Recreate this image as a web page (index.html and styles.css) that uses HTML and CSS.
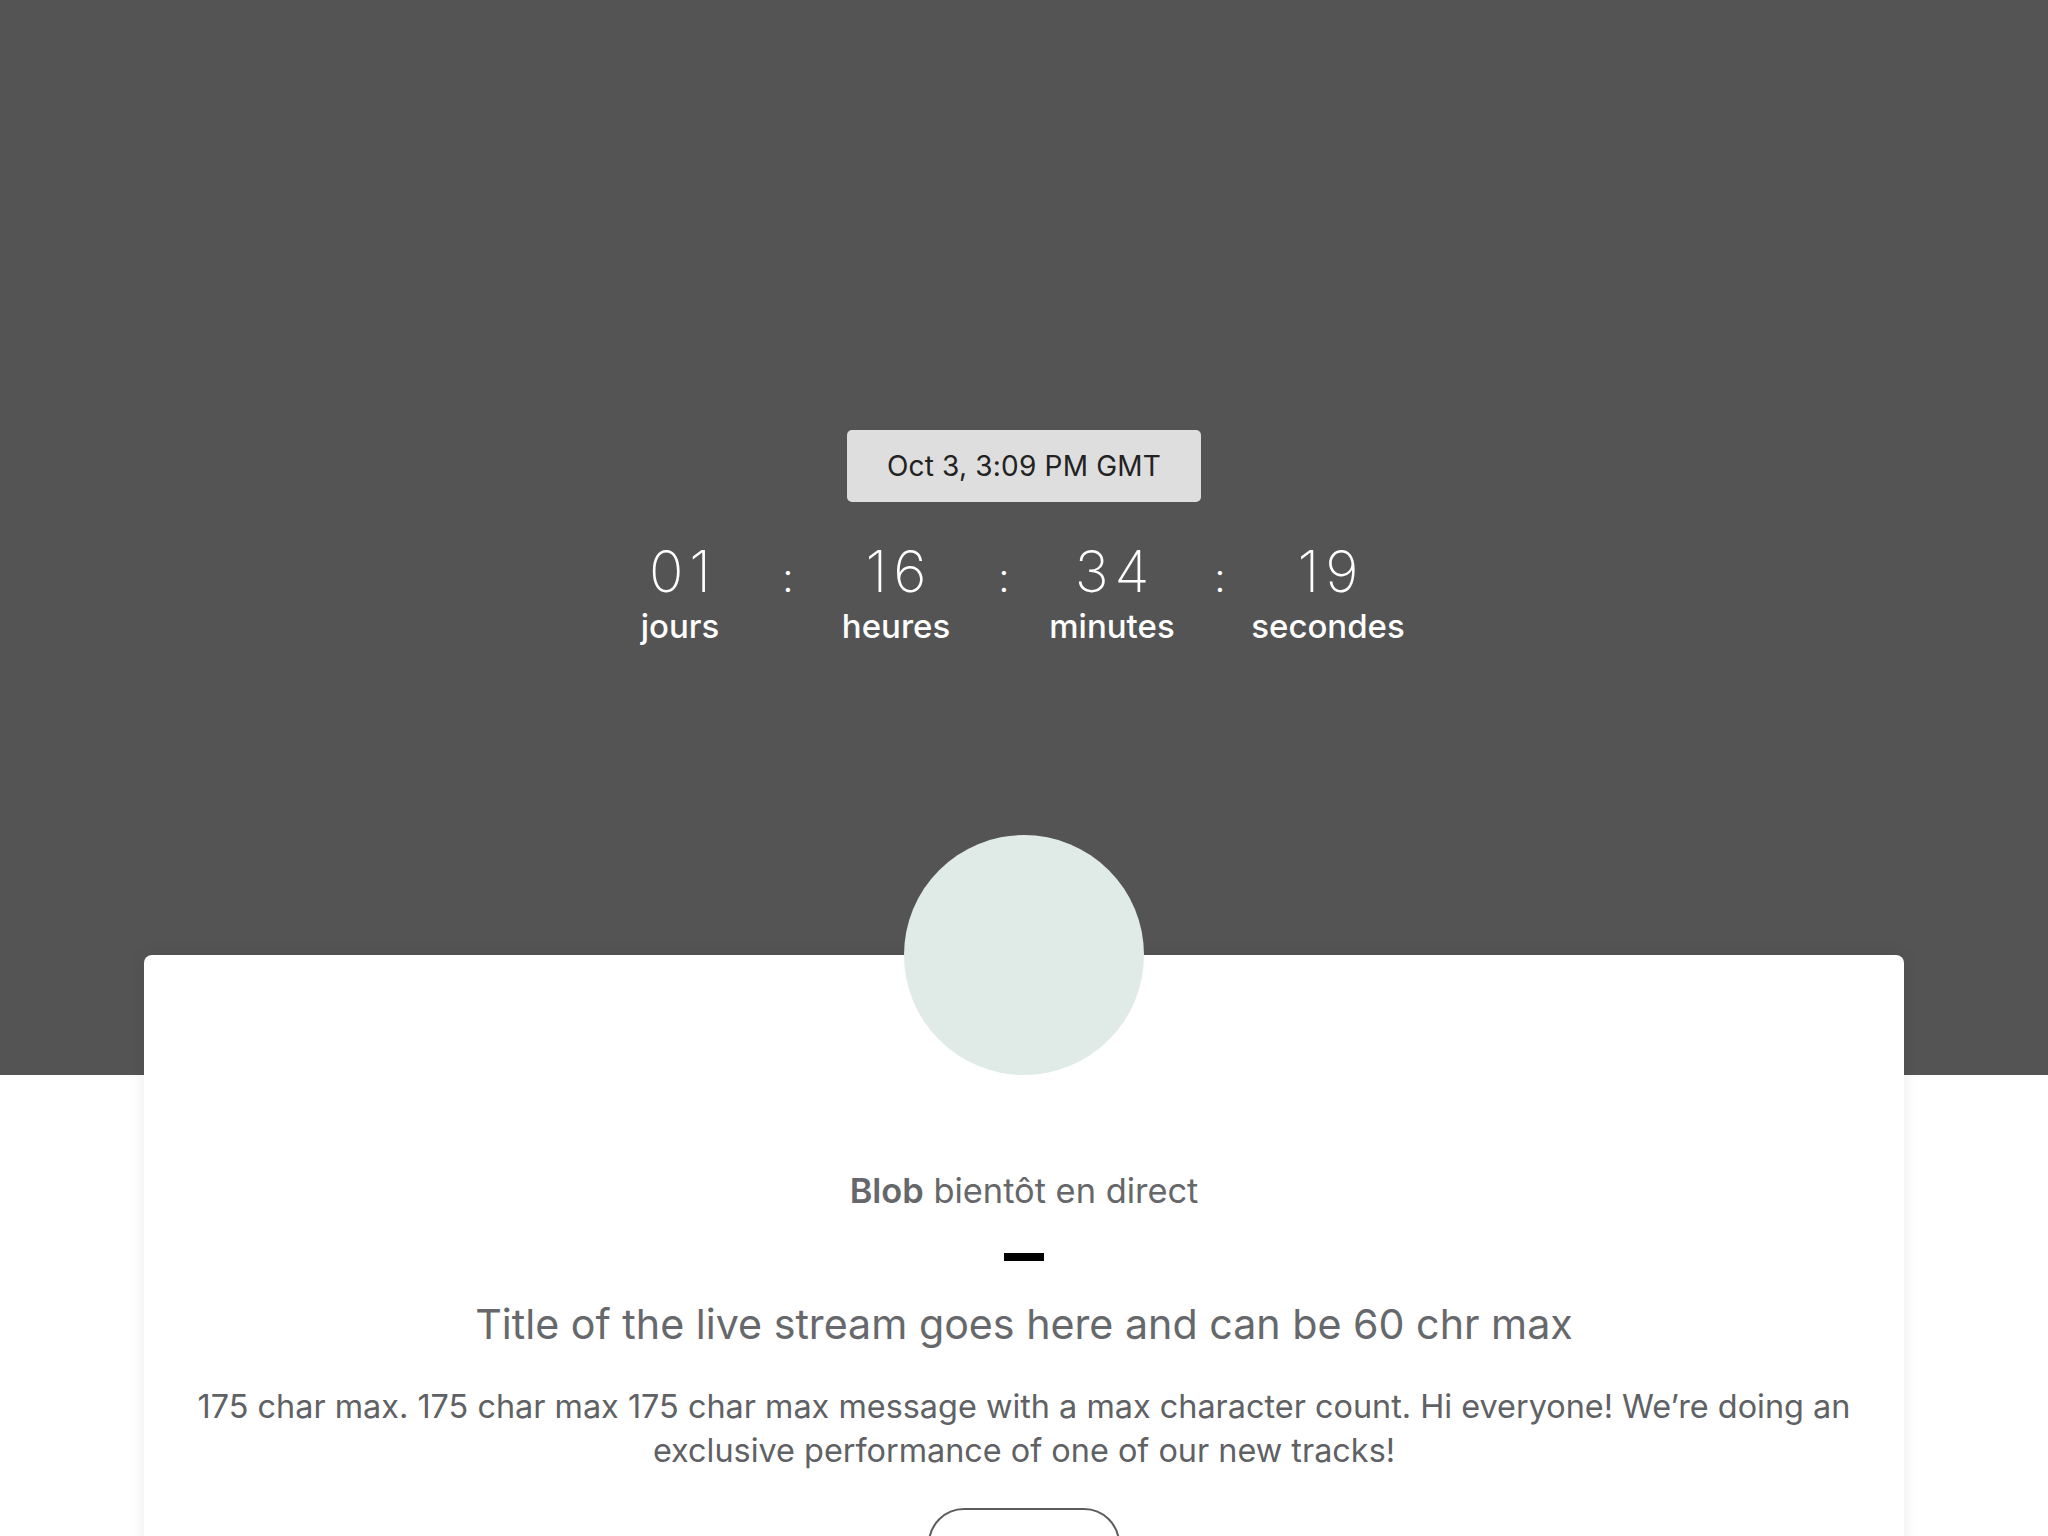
FILE: index.html
```html
<!DOCTYPE html>
<html lang="fr">
<head>
<meta charset="utf-8">
<title>Blob bientôt en direct</title>
<link rel="stylesheet" href="styles.css">
</head>
<body>
<header class="hero">
  <div class="date-pill">Oct 3, 3:09 PM GMT</div>
  <div class="countdown">
    <div class="unit"><span class="num">01</span><span class="label">jours</span></div>
    <span class="sep">:</span>
    <div class="unit"><span class="num">16</span><span class="label">heures</span></div>
    <span class="sep">:</span>
    <div class="unit"><span class="num">34</span><span class="label">minutes</span></div>
    <span class="sep">:</span>
    <div class="unit"><span class="num">19</span><span class="label">secondes</span></div>
  </div>
</header>
<main class="card">
  <div class="avatar"></div>
  <p class="status"><strong>Blob</strong> bientôt en direct</p>
  <div class="dash"></div>
  <h1 class="title">Title of the live stream goes here and can be 60 chr max</h1>
  <p class="message">175 char max. 175 char max 175 char max message with a max character count. Hi everyone! We’re doing an exclusive performance of one of our new tracks!</p>
  <button class="remind" type="button" aria-label="Me le rappeler"></button>
</main>
</body>
</html>
```

FILE: styles.css
```css
* { box-sizing: border-box; }
html, body { margin: 0; padding: 0; }
body {
  background: #ffffff;
  font-family: Inter, "Noto Sans", "Liberation Sans", sans-serif;
  overflow: hidden;
  height: 1536px;
}
.hero {
  background: #545454;
  height: 1075px;
  padding-top: 430px;
  display: flex;
  flex-direction: column;
  align-items: center;
}
.date-pill {
  background: #dedede;
  color: #222222;
  height: 72px;
  line-height: 72px;
  padding: 0 40px;
  border-radius: 5px;
  font-size: 28px;
  letter-spacing: 0.2px;
}
.countdown {
  margin-top: 42px;
  display: grid;
  grid-template-columns: 160px 56px 160px 56px 160px 56px 160px;
  padding-right: 40px;
  color: #ffffff;
}
.unit {
  display: flex;
  flex-direction: column;
  align-items: center;
}
.num {
  font-size: 57px;
  font-weight: 200;
  line-height: 56px;
  letter-spacing: 6px;
  padding-left: 6px;
}
.label {
  margin-top: 8px;
  font-size: 33px;
  font-weight: 500;
  line-height: 36px;
}
.sep {
  text-align: center;
  font-size: 40px;
  font-weight: 300;
  line-height: 40px;
  padding-top: 14px;
}
.card {
  margin: -120px 144px 0;
  background: #ffffff;
  border-radius: 8px;
  box-shadow: 0 0 18px rgba(0, 0, 0, 0.08);
  padding: 0 48px 40px;
  display: flex;
  flex-direction: column;
  align-items: center;
  text-align: center;
  min-height: 700px;
}
.avatar {
  width: 240px;
  height: 240px;
  border-radius: 50%;
  background: #e0ebe7;
  margin-top: -120px;
}
.status {
  margin: 94px 0 0;
  font-size: 34.4px;
  line-height: 44px;
  color: #65676a;
}
.status strong { font-weight: 600; }
.dash {
  margin-top: 40px;
  width: 40px;
  height: 8px;
  background: #000000;
}
.title {
  margin: 35px 0 0;
  font-size: 41.2px;
  font-weight: 400;
  line-height: 56px;
  color: #66686b;
}
.message {
  margin: 33px 0 0;
  font-size: 32.4px;
  line-height: 44px;
  color: #606165;
}
.remind {
  margin-top: 35px;
  width: 192px;
  height: 96px;
  border: 2px solid #5c5c60;
  border-radius: 36px;
  background: #ffffff;
  padding: 0;
}
```
